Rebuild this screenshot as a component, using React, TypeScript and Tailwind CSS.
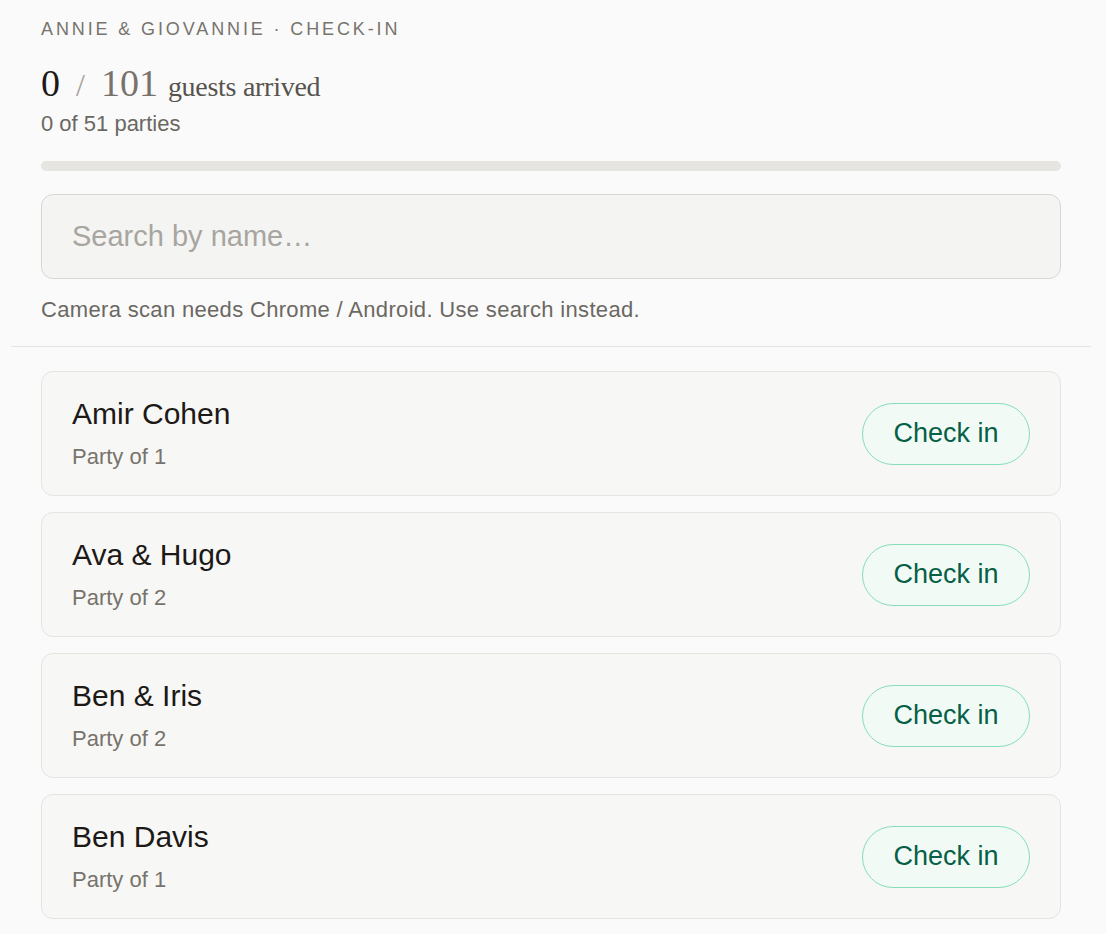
import React, { useState } from "react";

const guests = [
  { name: "Amir Cohen", size: 1 },
  { name: "Ava & Hugo", size: 2 },
  { name: "Ben & Iris", size: 2 },
  { name: "Ben Davis", size: 1 },
  { name: "Camille Laurent", size: 1 },
];

export default function App() {
  const [query, setQuery] = useState("");

  const shown = guests.filter((g) =>
    g.name.toLowerCase().includes(query.toLowerCase())
  );

  return (
    <div
      className="min-h-screen bg-[#fafafa] pl-[11px] pr-[15px]"
      style={{ fontFamily: "'Liberation Sans', Arial, sans-serif" }}
    >
      <div className="px-[30px] pt-[17px] pb-[22px]">
        <div className="text-[18px] leading-[24px] tracking-[0.16em] text-[#78736c]">
          ANNIE &amp; GIOVANNIE · CHECK-IN
        </div>
        <div className="mt-[24px] flex items-baseline font-['Liberation_Serif',serif] leading-[36px]">
          <span className="text-[38px] text-[#1c1917]">0</span>
          <span className="mx-[16px] text-[32px] text-[#a8a29e]">/</span>
          <span className="text-[38px] text-[#78716c]">101</span>
          <span className="ml-[10px] text-[28px] tracking-[-0.01em] text-[#57534e]">
            guests arrived
          </span>
        </div>
        <div className="mt-[5px] text-[22px] leading-[28px] text-[#6b6862]">
          0 of 51 parties
        </div>
        <div className="mt-[23px] h-[10px] rounded-full bg-[#e7e5e2]" />
        <input
          value={query}
          onChange={(e) => setQuery(e.target.value)}
          placeholder="Search by name…"
          className="mt-[23px] block h-[85px] w-full rounded-[12px] border border-[#d9d7d3] bg-[#f4f4f2] px-[30px] text-[29px] text-[#1c1917] outline-none placeholder:text-[#a8a5a0]"
        />
        <div className="mt-[17px] text-[22px] leading-[28px] tracking-[0.015em] text-[#6b6862]">
          Camera scan needs Chrome / Android. Use search instead.
        </div>
      </div>
      <div className="border-t border-[#e7e5e2]" />
      <div className="flex flex-col gap-[16px] px-[30px] pt-[24px]">
        {shown.map((g) => (
          <div
            key={g.name}
            className="flex h-[125px] shrink-0 items-center justify-between rounded-[12px] border border-[#e6e4e0] bg-[#f7f7f5] px-[30px]"
          >
            <div>
              <div className="text-[30px] leading-[36px] text-[#1c1917]">
                {g.name}
              </div>
              <div className="mt-[11px] text-[22px] leading-[28px] text-[#78736c]">
                Party of {g.size}
              </div>
            </div>
            <button className="h-[62px] w-[168px] rounded-full border border-[#86dfb8] bg-[#f1faf5] text-[27px] text-[#065f46]">
              Check in
            </button>
          </div>
        ))}
      </div>
    </div>
  );
}
